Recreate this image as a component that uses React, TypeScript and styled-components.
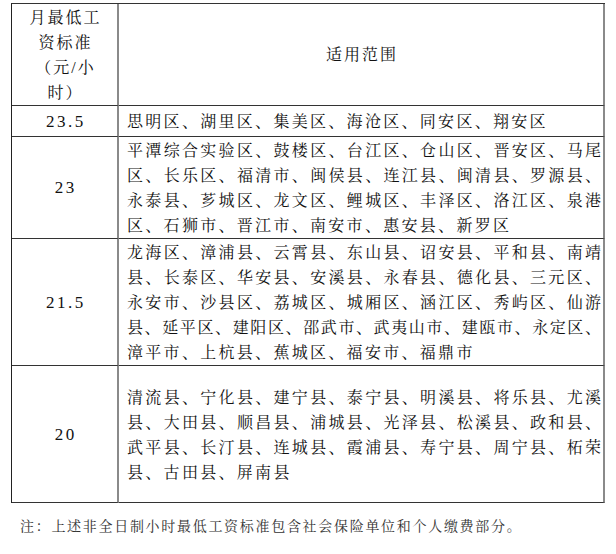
import React from "react";
import styled, { createGlobalStyle } from "styled-components";

const Global = createGlobalStyle`
  *, *::before, *::after { box-sizing: border-box; }
  html, body { margin: 0; padding: 0; background: #fff; }
  body {
    font-family: "Liberation Serif", "Noto Serif CJK SC", "Noto Sans CJK SC", serif;
    color: #111;
  }
`;

const Page = styled.div`
  padding: 3px 0 0 11px;
`;

const Table = styled.div`
  width: 594px;
  display: grid;
  grid-template-columns: 107px 486px;
  border-top: 1px solid #333;
  border-left: 1px solid #222;
`;

const KeyCell = styled.div`
  border-right: 2px solid #8a8a8a;
  border-bottom: 1px solid #333;
  display: flex;
  flex-direction: column;
  align-items: center;
  justify-content: center;
`;

const HeadKey = styled.div`
  border-right: 2px solid #8a8a8a;
  border-bottom: 1px solid #333;
  padding-top: 1px;
  display: flex;
  flex-direction: column;
  align-items: center;
  font-size: 16px;
  line-height: 25px;
  letter-spacing: 2px;
  padding-left: 2px;
`;

const HeadArea = styled.div`
  border-right: 2px solid #8a8a8a;
  border-bottom: 1px solid #333;
  display: flex;
  align-items: center;
  justify-content: center;
  font-size: 16px;
  letter-spacing: 2px;
  padding-left: 2px;
  padding-bottom: 2px;
`;

const Rate = styled.span`
  font-family: "Liberation Serif", "Times New Roman", serif;
  font-size: 17px;
  letter-spacing: 2.5px;
  padding-left: 2.5px;
  line-height: 25px;
`;

const AreaCell = styled.div<{ $top: number; $bottom: number }>`
  border-right: 2px solid #8a8a8a;
  border-bottom: 1px solid #333;
  padding: ${(p) => p.$top}px 2px ${(p) => p.$bottom}px 8px;
  font-size: 16px;
  line-height: 25px;
`;

const Line = styled.div<{ $full: boolean }>`
  white-space: nowrap;
  text-align: ${(p) => (p.$full ? "justify" : "left")};
  text-align-last: ${(p) => (p.$full ? "justify" : "left")};
  letter-spacing: ${(p) => (p.$full ? "0" : "2.3px")};
`;

const Note = styled.div`
  margin: 14px 0 0 9px;
  font-size: 14px;
  line-height: 20px;
  letter-spacing: 1.7px;
  color: #333;
`;

type Row = { rate: string; top: number; bottom: number; lines: string[] };

const rows: Row[] = [
  {
    rate: "23.5",
    top: 3,
    bottom: 2,
    lines: ["思明区、湖里区、集美区、海沧区、同安区、翔安区"],
  },
  {
    rate: "23",
    top: 1,
    bottom: 0,
    lines: [
      "平潭综合实验区、鼓楼区、台江区、仓山区、晋安区、马尾",
      "区、长乐区、福清市、闽侯县、连江县、闽清县、罗源县、",
      "永泰县、芗城区、龙文区、鲤城区、丰泽区、洛江区、泉港",
      "区、石狮市、晋江市、南安市、惠安县、新罗区",
    ],
  },
  {
    rate: "21.5",
    top: 1,
    bottom: 0,
    lines: [
      "龙海区、漳浦县、云霄县、东山县、诏安县、平和县、南靖",
      "县、长泰区、华安县、安溪县、永春县、德化县、三元区、",
      "永安市、沙县区、荔城区、城厢区、涵江区、秀屿区、仙游",
      "县、延平区、建阳区、邵武市、武夷山市、建瓯市、永定区、",
      "漳平市、上杭县、蕉城区、福安市、福鼎市",
    ],
  },
  {
    rate: "20",
    top: 19,
    bottom: 17,
    lines: [
      "清流县、宁化县、建宁县、泰宁县、明溪县、将乐县、尤溪",
      "县、大田县、顺昌县、浦城县、光泽县、松溪县、政和县、",
      "武平县、长汀县、连城县、霞浦县、寿宁县、周宁县、柘荣",
      "县、古田县、屏南县",
    ],
  },
];

export default function App() {
  return (
    <>
      <Global />
      <Page>
        <Table>
          <HeadKey>
            <span>月最低工</span>
            <span>资标准</span>
            <span>（元/小</span>
            <span>时）</span>
          </HeadKey>
          <HeadArea>适用范围</HeadArea>
          {rows.map((r) => (
            <React.Fragment key={r.rate}>
              <KeyCell>
                <Rate>{r.rate}</Rate>
              </KeyCell>
              <AreaCell $top={r.top} $bottom={r.bottom}>
                {r.lines.map((l, i) => (
                  <Line key={i} $full={i < r.lines.length - 1}>
                    {l}
                  </Line>
                ))}
              </AreaCell>
            </React.Fragment>
          ))}
        </Table>
        <Note>注：上述非全日制小时最低工资标准包含社会保险单位和个人缴费部分。</Note>
      </Page>
    </>
  );
}
